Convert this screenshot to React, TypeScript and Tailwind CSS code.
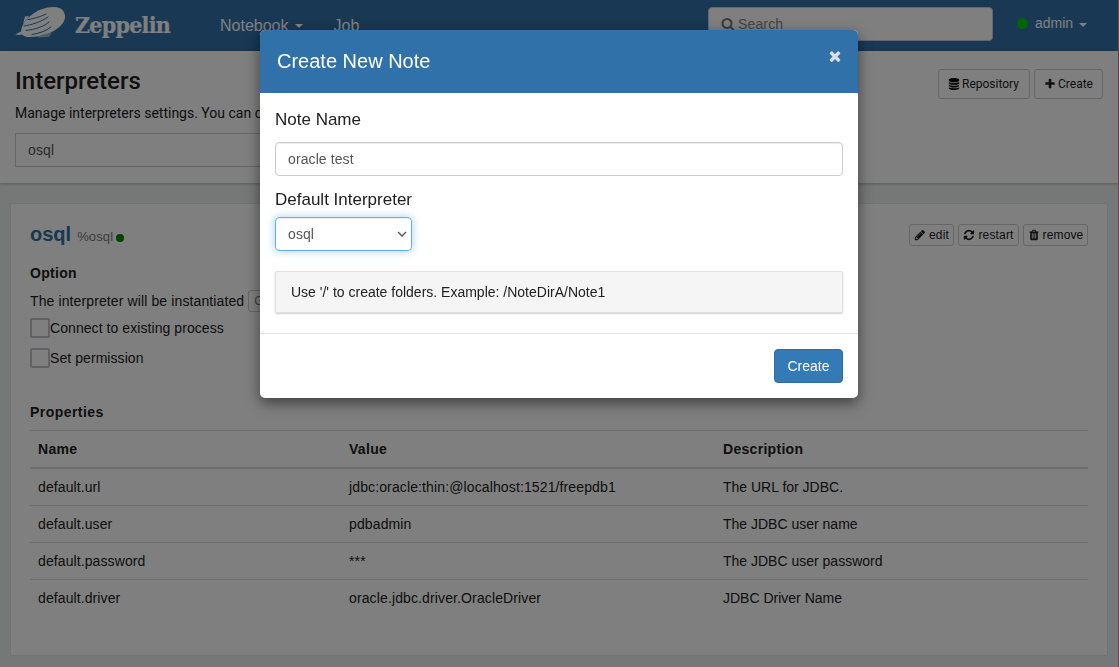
import React from "react";

const ICONS = {
  refresh:
    "M1639 1056q0 5-1 7-64 268-268 434.5t-478 166.5q-146 0-282.5-55t-243.5-157l-129 129q-19 19-45 19t-45-19-19-45v-448q0-26 19-45t45-19h448q26 0 45 19t19 45-19 45l-137 137q71 66 161 102t187 36q134 0 250-65t186-179q11-17 53-117 8-23 30-23h192q13 0 22.5 9.5t9.5 22.5zm25-800v448q0 26-19 45t-45 19h-448q-26 0-45-19t-19-45 19-45l138-138q-148-137-349-137-134 0-250 65t-186 179q-11 17-53 117-8 23-30 23h-199q-13 0-22.5-9.5t-9.5-22.5v-7q65-268 270-434.5t480-166.5q146 0 284 55.5t245 156.5l130-129q19-19 45-19t45 19 19 45z",
  trash:
    "M704 1376v-704q0-14-9-23t-23-9h-64q-14 0-23 9t-9 23v704q0 14 9 23t23 9h64q14 0 23-9t9-23zm256 0v-704q0-14-9-23t-23-9h-64q-14 0-23 9t-9 23v704q0 14 9 23t23 9h64q14 0 23-9t9-23zm256 0v-704q0-14-9-23t-23-9h-64q-14 0-23 9t-9 23v704q0 14 9 23t23 9h64q14 0 23-9t9-23zm-544-992h448l-48-117q-7-9-17-11h-317q-10 2-17 11zm928 32v64q0 14-9 23t-23 9h-96v948q0 83-47 143.5t-113 60.5h-832q-66 0-113-58.5t-47-141.5v-952h-96q-14 0-23-9t-9-23v-64q0-14 9-23t23-9h309l70-167q15-37 54-63t79-26h320q40 0 79 26t54 63l70 167h309q14 0 23 9t9 23z",
  pencil:
    "M491 1536l91-91-235-235-91 91v107h128v128h107zm523-928q0-22-22-22-10 0-17 7l-542 542q-7 7-7 17 0 22 22 22 10 0 17-7l542-542q7-7 7-17zm-54-192l416 416-832 832h-416v-416zm683 96q0 53-37 90l-166 166-416-416 166-165q36-38 90-38 53 0 91 38l235 234q37 39 37 91z",
  database:
    "M896 768q237 0 443-43t325-127v170q0 69-103 128t-280 93.5-385 34.5-385-34.5-280-93.5-103-128v-170q119 84 325 127t443 43zm0 768q237 0 443-43t325-127v170q0 69-103 128t-280 93.5-385 34.5-385-34.5-280-93.5-103-128v-170q119 84 325 127t443 43zm0-384q237 0 443-43t325-127v170q0 69-103 128t-280 93.5-385 34.5-385-34.5-280-93.5-103-128v-170q119 84 325 127t443 43zm0-1152q208 0 385 34.5t280 93.5 103 128v128q0 69-103 128t-280 93.5-385 34.5-385-34.5-280-93.5-103-128v-128q0-69 103-128t280-93.5 385-34.5z",
  plus: "M1600 736v192q0 40-28 68t-68 28h-416v416q0 40-28 68t-68 28h-192q-40 0-68-28t-28-68v-416h-416q-40 0-68-28t-28-68v-192q0-40 28-68t68-28h416v-416q0-40 28-68t68-28h192q40 0 68 28t28 68v416h416q40 0 68 28t28 68z",
  search:
    "M1216 832q0-185-131.5-316.5t-316.5-131.5-316.5 131.5-131.5 316.5 131.5 316.5 316.5 131.5 316.5-131.5 131.5-316.5zm512 832q0 52-38 90t-90 38q-54 0-90-38l-343-342q-179 124-399 124-143 0-273.5-55.5t-225-150-150-225-55.5-273.5 55.5-273.5 150-225 225-150 273.5-55.5 273.5 55.5 225 150 150 225 55.5 273.5q0 220-124 399l343 343q37 37 37 90z",
  times:
    "M1490 1322q0 40-28 68l-136 136q-28 28-68 28t-68-28l-294-294-294 294q-28 28-68 28t-68-28l-136-136q-28-28-28-68t28-68l294-294-294-294q-28-28-28-68t28-68l136-136q28-28 68-28t68 28l294 294 294-294q28-28 68-28t68 28l136 136q28 28 28 68t-28 68l-294 294 294 294q28 28 28 68z",
};

function Icon({ name, className }: { name: keyof typeof ICONS; className: string }) {
  return (
    <svg viewBox="0 0 1792 1792" className={className} fill="currentColor" aria-hidden="true">
      <path d={ICONS[name]} />
    </svg>
  );
}

function Caret() {
  return <span className="border-x-4 border-t-4 border-x-transparent border-t-current" />;
}

function Logo() {
  return (
    <svg viewBox="0 0 52 34" className="h-[34px] w-[52px]" aria-hidden="true">
      <path
        d="M6 25 C7 14 22 1 39 1 C46 1 50 5 50 11 C50 20 34 31 15 31 C9 31 6 29 6 25Z"
        fill="#fff"
      />
      <path d="M0 28.5 L6 25.5 L8 28 L5 29Z M10 10.5 L14 10 L8 18Z" fill="#fff" />
      <path d="M22 30.5 L37 26 L34 31 L24 31.5Z" fill="#9ab9d5" />
      <g fill="none" stroke="#3071a9" strokeWidth="1" strokeLinecap="round">
        <path d="M13 13.5 C18 13 25 11 31 8" />
        <path d="M9 20 C16 19 26 16 33 11" />
        <path d="M11 24.5 C20 23.5 29 20.5 34 16" />
        <path d="M17 28.5 C24 27.5 31 25 36 21" />
      </g>
    </svg>
  );
}

function NavBar() {
  return (
    <nav className="flex h-[51px] shrink-0 items-start bg-[#3071a9] pl-[15px] text-white">
      <div className="pt-[6px]">
        <Logo />
      </div>
      <div className="w-[153px] pt-[9px] pl-[8px]">
        <span className="font-['DejaVu_Serif'] text-[23px] leading-[32px] font-bold tracking-[-0.75px] [-webkit-text-stroke:0.2px_white] [font-stretch:condensed]">
          Zeppelin
        </span>
      </div>
      <div className="flex h-[51px] items-center gap-[6px] text-[16px]">
        Notebook <Caret />
      </div>
      <div className="flex h-[52px] items-center pl-[31px] text-[16px]">Job</div>
      <div className="mt-[7px] mr-[24px] ml-auto flex h-[34px] w-[285px] gap-[3px] rounded-[4px] border border-[#ccc] bg-white pt-[8px] pl-[12px] text-[14px] leading-[16px] text-[#888]">
        <Icon name="search" className="mt-px size-[14px] text-[#777]" />
        <span className="tracking-[0.15px]">Search</span>
      </div>
      <div className="flex h-[46px] w-[101px] items-center text-[14px]">
        <span className="mr-[7px] size-[11px] rounded-full bg-[#00c800]" />
        admin
        <span className="mt-[3px] ml-[6px] flex">
          <Caret />
        </span>
      </div>
    </nav>
  );
}

function PageHeader() {
  return (
    <header className="flex h-[132px] shrink-0 justify-between bg-white pr-[15px] pl-[15px] font-['Roboto'] text-[#212121] shadow-[0_1px_3px_rgba(0,0,0,0.25)]">
      <div className="flex w-[600px] flex-col">
        <h1 className="mt-[14px] text-[24px] leading-[32px] font-medium">Interpreters</h1>
        <p className="mt-[8px] text-[14px] leading-[16px] whitespace-nowrap">
          Manage interpreters settings. You can create
        </p>
        <div className="mt-[12px] flex h-[34px] w-[400px] items-center border border-[#ccc] pl-[12px] font-['Liberation_Sans'] text-[14px] tracking-[0.15px] text-[#555]">
          osql
        </div>
      </div>
      <div className="flex gap-[4px] pt-[18px] text-[12px]">
        <button className="flex h-[30px] w-[92px] items-center gap-[2px] rounded-[3px] border border-[#ccc] pl-[9px]">
          <Icon name="database" className="size-[12px] text-black" />
          Repository
        </button>
        <button className="flex h-[30px] w-[69px] items-center gap-[2px] rounded-[3px] border border-[#ccc] pl-[9px]">
          <Icon name="plus" className="size-[12px]" />
          Create
        </button>
      </div>
    </header>
  );
}

const PROPERTIES = [
  ["default.url", "jdbc:oracle:thin:@localhost:1521/freepdb1", "The URL for JDBC."],
  ["default.user", "pdbadmin", "The JDBC user name"],
  ["default.password", "***", "The JDBC user password"],
  ["default.driver", "oracle.jdbc.driver.OracleDriver", "JDBC Driver Name"],
];

function SmallButton({
  icon,
  className,
  children,
}: {
  icon: keyof typeof ICONS;
  className: string;
  children: React.ReactNode;
}) {
  return (
    <button
      className={
        "flex h-[22px] items-center justify-center gap-[3px] rounded-[3px] border border-[#ccc] text-[12px] tracking-[0.15px] " +
        className
      }
    >
      <Icon name={icon} className="size-[12px]" />
      {children}
    </button>
  );
}

function CheckRow({ children }: { children: React.ReactNode }) {
  return (
    <label className="flex h-[30px] items-center text-[14px] tracking-[0.07px]">
      <span className="size-[20px] rounded-[2px] border-2 border-[#c4c4cb]" />
      {children}
    </label>
  );
}

function InterpreterCard() {
  return (
    <section className="mt-[20px] ml-[10px] flex h-[453px] w-[1098px] shrink-0 flex-col rounded-[2px] border border-[#e4e6e6] bg-white pr-[19px] pl-[19px] text-[14px] text-[#212121]">
      <div className="flex h-[42px] items-start justify-between pt-[18px]">
        <div className="flex items-baseline leading-[24px]">
          <h3 className="text-[20px] font-bold text-[#3071a9]">osql</h3>
          <span className="ml-[6px] text-[13px] tracking-[0.15px] text-[#777]">%osql</span>
          <span className="ml-[3px] size-[8px] translate-y-px rounded-full bg-[#008000]" />
        </div>
        <div className="flex gap-[4px] pt-[2px]">
          <SmallButton icon="pencil" className="w-[45px]">edit</SmallButton>
          <SmallButton icon="refresh" className="w-[61px]">restart</SmallButton>
          <SmallButton icon="trash" className="w-[65px]">remove</SmallButton>
        </div>
      </div>
      <h5 className="mt-[17px] text-[14px] leading-[20px] font-bold tracking-[0.3px]">Option</h5>
      <div className="mt-[7px] flex h-[22px] items-center tracking-[0.115px] whitespace-nowrap">
        The interpreter will be instantiated
        <span className="ml-[4px] flex h-[22px] w-[70px] items-center rounded-[3px] border border-[#ccc] pl-[5px] text-[12px] text-[#777]">
          Globally
        </span>
      </div>
      <div className="mt-px">
        <CheckRow>Connect to existing process</CheckRow>
        <CheckRow>Set permission</CheckRow>
      </div>
      <h5 className="mt-[29px] text-[14px] leading-[20px] font-bold tracking-[0.45px]">Properties</h5>
      <div className="mt-[8px] grid h-[39px] w-[1058px] grid-cols-[311px_374px_373px] items-center border-t border-b-2 border-[#ddd] font-bold tracking-[0.3px]">
        <span className="pl-[8px]">Name</span>
        <span className="pl-[8px]">Value</span>
        <span className="pl-[8px]">Description</span>
      </div>
      {PROPERTIES.map(([name, value, description]) => (
        <div
          key={name}
          className="grid h-[37px] w-[1058px] grid-cols-[311px_374px_373px] items-center border-b border-[#ddd] last:border-b-0"
        >
          <span className="pl-[8px] tracking-[0.1px]">{name}</span>
          <span className="pl-[8px] tracking-[0.125px]">{value}</span>
          <span className="pl-[8px]">{description}</span>
        </div>
      ))}
    </section>
  );
}

function CreateNoteDialog() {
  return (
    <div className="mt-[30px] ml-[260px] h-[368px] w-[598px] overflow-hidden rounded-[5px] bg-white text-[#212121]">
      <div className="flex h-[63px] items-center justify-between bg-[#3071a9] pr-[15px] pb-[2px] pl-[17px] text-white">
        <h4 className="text-[20px]">Create New Note</h4>
        <Icon name="times" className="mb-[9px] size-[16px] text-[#dedede]" />
      </div>
      <div className="flex h-[241px] flex-col border-b border-[#e5e5e5] px-[15px] pt-[17px]">
        <span className="text-[17px] leading-[20px]">Note Name</span>
        <div className="mt-[12px] flex h-[34px] items-center rounded-[4px] border border-[#ccc] pl-[12px] text-[14px] tracking-[0.1px] text-[#555] shadow-[inset_0_1px_1px_rgba(0,0,0,0.075)]">
          oracle test
        </div>
        <span className="mt-[14px] text-[17px] leading-[20px]">Default Interpreter</span>
        <div className="mt-[7px] flex h-[34px] w-[137px] items-center justify-between rounded-[4px] border border-[#66afe9] pr-[4px] pl-[12px] text-[14px] tracking-[0.1px] text-[#555] shadow-[inset_0_1px_1px_rgba(0,0,0,0.075),0_0_8px_rgba(102,175,233,0.6)]">
          osql
          <svg viewBox="0 0 10 10" className="size-[10px]" fill="none" stroke="#555" strokeWidth="1.4">
            <path d="M1 3l4 4 4-4" />
          </svg>
        </div>
        <div className="mt-[20px] flex h-[42px] items-center rounded-[2px] border border-[#e0e0e0] bg-[#f5f5f5] pl-[15px] text-[14px] shadow-[0_1px_2px_rgba(0,0,0,0.2)]">
          Use '/' to create folders. Example: /NoteDirA/Note1
        </div>
      </div>
      <div className="flex justify-end pt-[15px] pr-[15px]">
        <button className="h-[34px] w-[69px] rounded-[4px] border border-[#2e6da4] bg-[#337ab7] text-[14px] text-white">
          Create
        </button>
      </div>
    </div>
  );
}

export default function App() {
  return (
    <div className="relative h-[667px] w-[1119px] overflow-hidden bg-[#ecf0f1] font-['Liberation_Sans',sans-serif]">
      <div className="flex h-full flex-col border-r border-[#8fb0c8]">
        <NavBar />
        <PageHeader />
        <InterpreterCard />
      </div>
      <div className="absolute inset-0 bg-black/50">
        <div className="drop-shadow-[0_5px_7px_rgba(0,0,0,0.5)]">
          <CreateNoteDialog />
        </div>
      </div>
    </div>
  );
}
